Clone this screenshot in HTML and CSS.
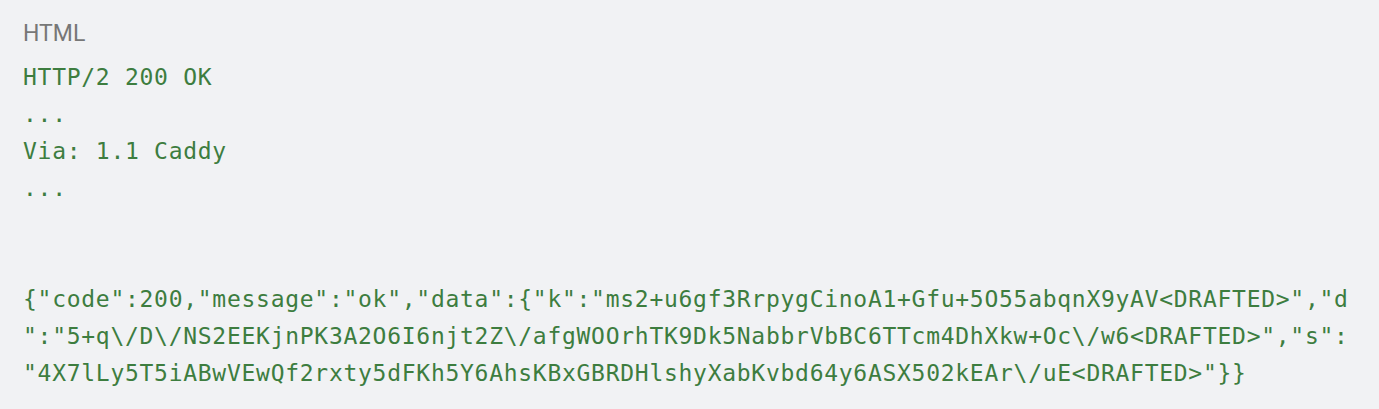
FILE: index.html
```html
<!DOCTYPE html>
<html lang="en">
<head>
<meta charset="utf-8">
<title>HTML</title>
<link rel="stylesheet" href="styles.css">
</head>
<body>
<div class="code-card">
  <div class="code-lang">HTML</div>
  <pre class="code-body">HTTP/2 200 OK
...
Via: 1.1 Caddy
...


{"code":200,"message":"ok","data":{"k":"ms2+u6gf3RrpygCinoA1+Gfu+5O55abqnX9yAV&lt;DRAFTED&gt;","d
":"5+q\/D\/NS2EEKjnPK3A2O6I6njt2Z\/afgWOOrhTK9Dk5NabbrVbBC6TTcm4DhXkw+Oc\/w6&lt;DRAFTED&gt;","s":
"4X7lLy5T5iABwVEwQf2rxty5dFKh5Y6AhsKBxGBRDHlshyXabKvbd64y6ASX502kEAr\/uE&lt;DRAFTED&gt;"}}</pre>
</div>
</body>
</html>
```

FILE: styles.css
```css
html, body {
  margin: 0;
  padding: 0;
  background: #f1f2f4;
}

.code-card {
  background: #f1f2f4;
  padding: 17px 23px 20px;
  min-height: 372px;
}

.code-lang {
  font-family: Roboto, "Noto Sans", sans-serif;
  font-size: 23px;
  line-height: 34px;
  color: #777777;
  margin-bottom: 7.5px;
}

.code-body {
  margin: 0;
  font-family: "DejaVu Sans Mono", "Liberation Mono", monospace;
  font-size: 23px;
  letter-spacing: 0.72px;
  line-height: 37px;
  color: #3d7d3f;
  white-space: pre;
}
```
